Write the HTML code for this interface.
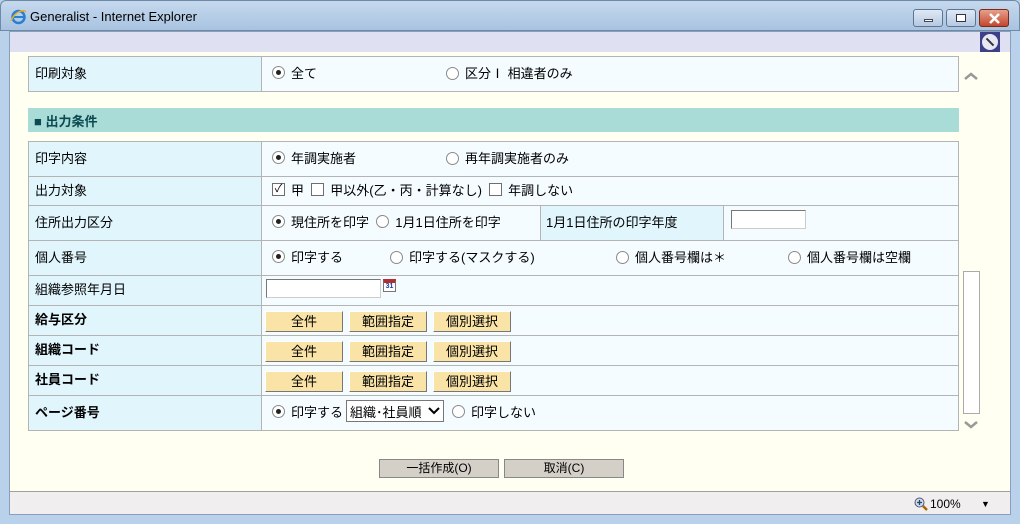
<!DOCTYPE html>
<html><head><meta charset="utf-8"><style>
*{margin:0;padding:0;box-sizing:border-box}
body{width:1020px;height:524px;overflow:hidden;position:relative;background:#b9d1ea;font-family:"Liberation Sans","Noto Sans CJK JP",sans-serif;font-size:13px;color:#000}
.a{position:absolute}
.title{left:0;top:0;width:1020px;height:31px;background:linear-gradient(#c6d9ee,#a9c3e0);border-radius:6px 6px 0 0;border:1px solid #6f8aa8}
.tt{left:30px;top:9px;font-size:13px;color:#000}
.client{left:9px;top:31px;width:1002px;height:484px;background:#fffff2;border:1px solid #8aa0b8}
.hdr{left:10px;top:32px;width:1000px;height:20px;background:#dfe0f2}
.status{left:10px;top:491px;width:1000px;height:23px;background:#f0eeee;border-top:1px solid #a0a0a0}
.row{position:absolute;left:28px;width:931px;border:1px solid #b4b4b4;border-top:none;display:flex}
.lab{width:233px;background:#e1f5fd;border-right:1px solid #b4b4b4;padding-left:6px;display:flex;align-items:center;padding-bottom:4px}
.val{flex:1;background:#f5fcff;display:flex;align-items:center;padding-left:10px;position:relative;padding-bottom:4px}
.b{font-weight:bold}
.rd{display:inline-block;width:13px;height:13px;border:1px solid #8a8a8a;border-radius:50%;background:#fff;vertical-align:-2px;margin-right:6px;position:relative}
.rd.on::after{content:"";position:absolute;left:3px;top:3px;width:5px;height:5px;border-radius:50%;background:#222}
.cb{display:inline-block;width:13px;height:13px;border:1px solid #6e6e6e;background:#fff;vertical-align:-2px;margin-right:6px;font-size:11px;line-height:11px;text-align:center}
.btn{position:absolute;height:21px;width:78px;background:#f9e3a6;border:1px solid;border-color:#fff #777 #777 #fff;text-align:center;line-height:19px}
.gb{position:absolute;top:459px;height:19px;width:120px;background:#d4d0c8;border:1px solid #888;text-align:center;line-height:17px;font-size:12px}
.wb{position:absolute;top:9px;height:18px;border:1px solid #5d7592;border-radius:3px;background:linear-gradient(#dfe9f5,#b5c9e1)}
</style></head><body>
<div class="a title"></div>
<svg class="a" style="left:10px;top:8px" width="17" height="17" viewBox="0 0 17 17"><circle cx="8.5" cy="9" r="6" fill="none" stroke="#2a7fd4" stroke-width="2.5"/><path d="M3 9h11" stroke="#2a7fd4" stroke-width="2"/><path d="M1 13 C5 3 14 1 16 4" fill="none" stroke="#e8b020" stroke-width="1.5"/></svg>
<div class="a tt">Generalist - Internet Explorer</div>
<div class="wb" style="left:913px;width:30px"><div class="a" style="left:10px;top:9px;width:9px;height:3px;background:#fff;border:1px solid #445"></div></div>
<div class="wb" style="left:946px;width:30px"><div class="a" style="left:9px;top:4px;width:10px;height:8px;border:1px solid #334;background:#fff"></div></div>
<div class="wb" style="left:979px;width:30px;background:linear-gradient(#e8a08a,#c4462e);border-color:#7a2a1a"><svg class="a" style="left:8px;top:3px" width="13" height="11"><path d="M2 1L11 10M11 1L2 10" stroke="#fff" stroke-width="2.5"/></svg></div>
<div class="a client"></div>
<div class="a hdr"></div>
<div class="a" style="left:980px;top:32px;width:20px;height:20px;background:#3d3f8a"><div class="a" style="left:2px;top:2px;width:16px;height:16px;border-radius:50%;background:#e8e8f0"></div><div class="a" style="left:5px;top:9px;width:10px;height:2px;background:#334;transform:rotate(45deg)"></div></div>

<div class="row" style="top:56px;height:36px;border-top:1px solid #b4b4b4"><div class="lab">印刷対象</div><div class="val"><span class="rd on"></span>全て<span style="position:absolute;left:184px"><span class="rd"></span>区分Ⅰ 相違者のみ</span></div></div>

<div class="a" style="left:28px;top:108px;width:931px;height:24px;background:#a9dbd7;font-weight:bold;color:#0b4a52;padding:3px 0 0 6px">■ 出力条件</div>

<div class="row" style="top:141px;height:36px;border-top:1px solid #b4b4b4"><div class="lab">印字内容</div><div class="val"><span class="rd on"></span>年調実施者<span style="position:absolute;left:184px"><span class="rd"></span>再年調実施者のみ</span></div></div>
<div class="row" style="top:177px;height:29px"><div class="lab">出力対象</div><div class="val"><span class="cb">✓</span>甲&nbsp;&nbsp;<span class="cb"></span>甲以外(乙・丙・計算なし)&nbsp;&nbsp;<span class="cb"></span>年調しない</div></div>
<div class="row" style="top:206px;height:35px"><div class="lab">住所出力区分</div><div class="val"><span class="rd on"></span>現住所を印字&nbsp;&nbsp;<span class="rd"></span>1月1日住所を印字
<div class="a" style="left:278px;top:0;width:184px;height:34px;background:#e1f5fd;border-left:1px solid #b4b4b4;border-right:1px solid #b4b4b4;padding:0 0 4px 5px;display:flex;align-items:center">1月1日住所の印字年度</div>
<div class="a" style="left:469px;top:4px;width:75px;height:19px;background:#fff;border:1px solid;border-color:#777 #ccc #ccc #777"></div></div></div>
<div class="row" style="top:241px;height:35px"><div class="lab">個人番号</div><div class="val"><span class="rd on"></span>印字する<span style="position:absolute;left:128px"><span class="rd"></span>印字する(マスクする)</span><span style="position:absolute;left:354px"><span class="rd"></span>個人番号欄は＊</span><span style="position:absolute;left:526px"><span class="rd"></span>個人番号欄は空欄</span></div></div>
<div class="row" style="top:276px;height:30px"><div class="lab">組織参照年月日</div><div class="val" style="padding-left:4px"><div style="width:115px;height:19px;background:#fff;border:1px solid;border-color:#777 #ccc #ccc #777"></div><div style="margin-left:2px;width:13px;height:13px;border:1px solid #777;background:#fff;border-top:4px solid #b03030;font-size:7px;color:#1a3aa0;font-weight:bold;line-height:8px;text-align:center;margin-top:-6px">31</div></div></div>
<div class="row" style="top:306px;height:30px"><div class="lab b">給与区分</div><div class="val"></div></div>
<div class="row" style="top:336px;height:30px"><div class="lab b">組織コード</div><div class="val"></div></div>
<div class="row" style="top:366px;height:30px"><div class="lab b">社員コード</div><div class="val"></div></div>
<div class="row" style="top:396px;height:35px"><div class="lab b">ページ番号</div><div class="val"><span class="rd on"></span>印字する<span style="display:inline-flex;align-items:center;margin:0 8px 0 3px;border:1px solid #777;background:#fff;height:22px;width:98px;padding:0 3px;white-space:nowrap">組織･社員順<svg style="margin-left:6px" width="12" height="8"><path d="M1 1L6 6L11 1" fill="none" stroke="#000" stroke-width="2"/></svg></span><span class="rd"></span>印字しない</div></div>

<div class="btn" style="left:265px;top:311px">全件</div><div class="btn" style="left:349px;top:311px">範囲指定</div><div class="btn" style="left:433px;top:311px">個別選択</div>
<div class="btn" style="left:265px;top:341px">全件</div><div class="btn" style="left:349px;top:341px">範囲指定</div><div class="btn" style="left:433px;top:341px">個別選択</div>
<div class="btn" style="left:265px;top:371px">全件</div><div class="btn" style="left:349px;top:371px">範囲指定</div><div class="btn" style="left:433px;top:371px">個別選択</div>

<svg class="a" style="left:964px;top:72px" width="14" height="9"><path d="M1 7L7 2L13 7" fill="none" stroke="#999" stroke-width="2.5"/></svg>
<div class="a" style="left:963px;top:271px;width:17px;height:143px;border:1px solid #aaa;background:#fff"></div>
<svg class="a" style="left:964px;top:420px" width="14" height="9"><path d="M1 2L7 7L13 2" fill="none" stroke="#999" stroke-width="2.5"/></svg>

<div class="gb" style="left:379px">一括作成(O)</div>
<div class="gb" style="left:504px">取消(C)</div>

<div class="a status"></div>
<svg class="a" style="left:914px;top:497px" width="14" height="14"><circle cx="5.5" cy="5.5" r="4.5" fill="#cde" stroke="#557" /><path d="M3 5.5h5M5.5 3v5" stroke="#246" stroke-width="1.3"/><path d="M9 9l4 4" stroke="#a60" stroke-width="2.5"/></svg>
<div class="a" style="left:930px;top:497px;font-size:12px">100%</div>
<div class="a" style="left:981px;top:499px;font-size:9px">▼</div>
</body></html>
